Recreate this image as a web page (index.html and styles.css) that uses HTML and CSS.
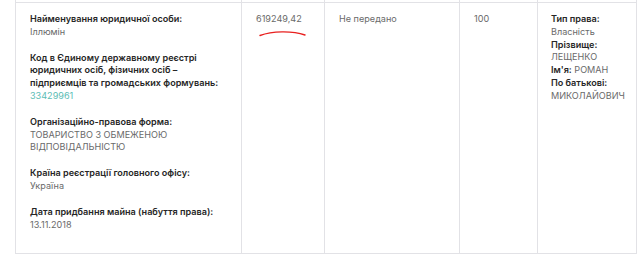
FILE: index.html
```html
<!DOCTYPE html>
<html lang="uk">
<head>
<meta charset="utf-8">
<link rel="stylesheet" href="styles.css">
</head>
<body>
<div class="table">
  <div class="cell prev"></div>
  <div class="cell prev"></div>
  <div class="cell prev"></div>
  <div class="cell prev"></div>
  <div class="cell prev"></div>

  <div class="cell row">
    <div class="block">
      <div class="label">Найменування юридичної особи:</div>
      <div class="value">Іллюмін</div>
    </div>
    <div class="block">
      <div class="label">Код в Єдиному державному реєстрі юридичних осіб, фізичних осіб – підприємців та громадських формувань:</div>
      <div class="value link">33429961</div>
    </div>
    <div class="block">
      <div class="label">Організаційно-правова форма:</div>
      <div class="value">ТОВАРИСТВО З ОБМЕЖЕНОЮ ВІДПОВІДАЛЬНІСТЮ</div>
    </div>
    <div class="block">
      <div class="label">Країна реєстрації головного офісу:</div>
      <div class="value">Україна</div>
    </div>
    <div class="block">
      <div class="label">Дата придбання майна (набуття права):</div>
      <div class="value">13.11.2018</div>
    </div>
  </div>
  <div class="cell row sum">
    <div class="value">619249,42</div>
    <svg class="mark" width="50" height="8" viewBox="0 0 50 8"><path d="M2 6.5 C 14 2, 34 1.5, 47 6" fill="none" stroke="#e8201f" stroke-width="1.4" stroke-linecap="round"/></svg>
  </div>
  <div class="cell row"><div class="value">Не передано</div></div>
  <div class="cell row"><div class="value">100</div></div>
  <div class="cell row owner">
    <div class="label">Тип права:</div>
    <div class="value">Власність</div>
    <div class="label">Прізвище:</div>
    <div class="value">ЛЕЩЕНКО</div>
    <div class="value"><span class="label">Ім'я:</span> РОМАН</div>
    <div class="label">По батькові:</div>
    <div class="value">МИКОЛАЙОВИЧ</div>
  </div>
</div>
</body>
</html>
```

FILE: styles.css
```css
html, body {
  margin: 0;
  padding: 0;
  background: #ffffff;
}
body {
  font-family: Inter, "Noto Sans", "DejaVu Sans", sans-serif;
  font-size: 9.1px;
  line-height: 12.8px;
  color: #666666;
}
.table {
  margin-left: 15px;
  width: 621px;
  display: grid;
  grid-template-columns: 226px 83px 135px 78px 99px;
  grid-template-rows: 2px 252px;
  border-left: 1px solid #e2e2e6;
  box-sizing: border-box;
}
.cell {
  border-right: 1px solid #e2e2e6;
  box-sizing: border-box;
}
.row {
  border-top: 1px solid #e2e2e6;
  border-bottom: 1px solid #e2e2e6;
  padding: 10px 12px 0 14px;
}
.block {
  margin-bottom: 13px;
}
.label {
  font-weight: 600;
  color: #262626;
}
.value {
  color: #6a6a6a;
}
.link {
  color: #5cbdb5;
}
.sum {
  position: relative;
}
.mark {
  position: absolute;
  left: 16px;
  top: 26px;
}
.owner {
  padding-left: 13px;
}
```
